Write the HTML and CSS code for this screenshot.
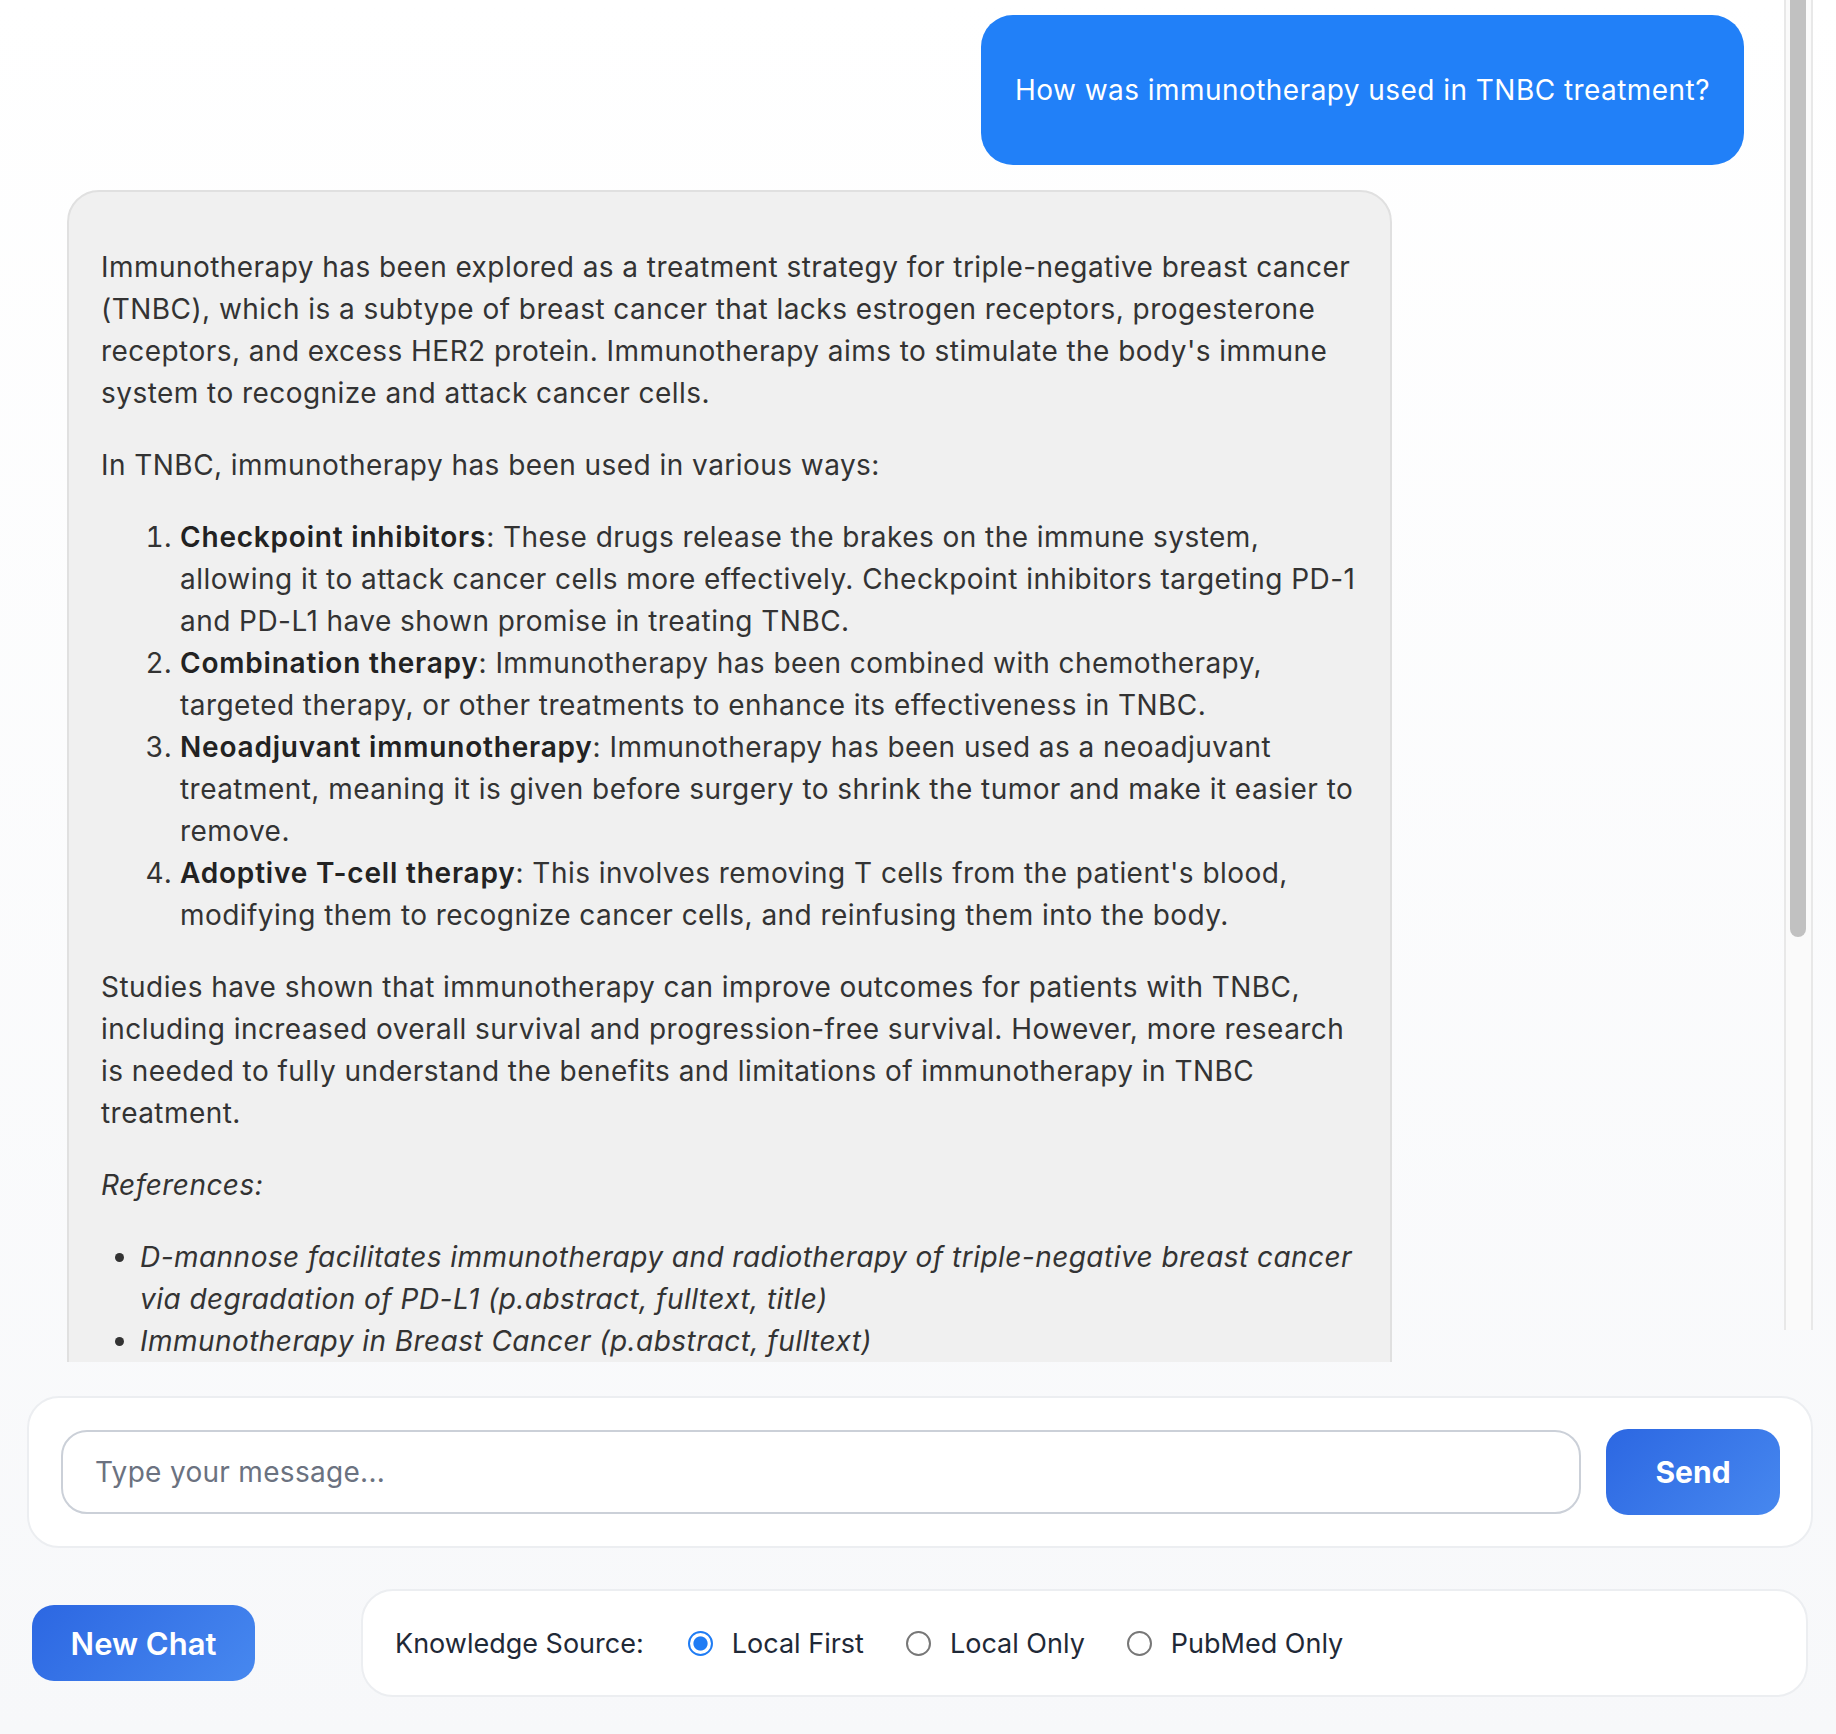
FILE: index.html
```html
<!DOCTYPE html>
<html lang="en">
<head>
<meta charset="utf-8">
<title>Chat</title>
<link rel="stylesheet" href="styles.css">
</head>
<body>
<div class="app">
  <div class="messages-area">
    <div class="messages">
      <div class="msg user">How was immunotherapy used in TNBC treatment?</div>
      <div class="msg assistant">
        <p>Immunotherapy has been explored as a treatment strategy for triple-negative breast cancer (TNBC), which is a subtype of breast cancer that lacks estrogen receptors, progesterone receptors, and excess HER2 protein. Immunotherapy aims to stimulate the body's immune system to recognize and attack cancer cells.</p>
        <p>In TNBC, immunotherapy has been used in various ways:</p>
        <ol>
          <li><strong>Checkpoint inhibitors</strong>: These drugs release the brakes on the immune system, allowing it to attack cancer cells more effectively. Checkpoint inhibitors targeting PD-1 and PD-L1 have shown promise in treating TNBC.</li>
          <li><strong>Combination therapy</strong>: Immunotherapy has been combined with chemotherapy, targeted therapy, or other treatments to enhance its effectiveness in TNBC.</li>
          <li><strong>Neoadjuvant immunotherapy</strong>: Immunotherapy has been used as a neoadjuvant treatment, meaning it is given before surgery to shrink the tumor and make it easier to remove.</li>
          <li><strong>Adoptive T-cell therapy</strong>: This involves removing T cells from the patient's blood, modifying them to recognize cancer cells, and reinfusing them into the body.</li>
        </ol>
        <p>Studies have shown that immunotherapy can improve outcomes for patients with TNBC, including increased overall survival and progression-free survival. However, more research is needed to fully understand the benefits and limitations of immunotherapy in TNBC treatment.</p>
        <p><em>References:</em></p>
        <ul class="refs">
          <li><em>D-mannose facilitates immunotherapy and radiotherapy of triple-negative breast cancer via degradation of PD-L1 (p.abstract, fulltext, title)</em></li>
          <li><em>Immunotherapy in Breast Cancer (p.abstract, fulltext)</em></li>
        </ul>
      </div>
    </div>
    <div class="scrollbar"><div class="thumb"></div></div>
  </div>
  <div class="composer">
    <input class="composer-input" type="text" placeholder="Type your message...">
    <button class="btn send-btn" type="button">Send</button>
  </div>
  <div class="bottom-row">
    <button class="btn new-chat" type="button">New Chat</button>
    <div class="source-card">
      <span class="source-label">Knowledge Source:</span>
      <label class="radio-item"><input type="radio" name="src" checked><span>Local First</span></label>
      <label class="radio-item"><input type="radio" name="src"><span>Local Only</span></label>
      <label class="radio-item"><input type="radio" name="src"><span>PubMed Only</span></label>
    </div>
  </div>
</div>
</body>
</html>
```

FILE: styles.css
```css
* { box-sizing: border-box; }
html, body { margin: 0; padding: 0; height: 100%; }
body {
  font-family: Inter, "Noto Sans", "Liberation Sans", sans-serif;
  background: linear-gradient(180deg, #ffffff 0%, #f7f8fa 100%);
  color: #333333;
  overflow: hidden;
}
.app {
  height: 1734px;
  display: flex;
  flex-direction: column;
}
.messages-area {
  flex: 1;
  min-height: 0;
  margin: 0 23px 0 27px;
  display: flex;
  align-items: flex-start;
}
.messages {
  flex: 1;
  min-width: 0;
  height: 100%;
  overflow: hidden;
  padding: 15px 40px 0 40px;
  display: flex;
  flex-direction: column;
  gap: 25px;
}
.scrollbar {
  width: 29px;
  height: 1330px;
  flex-shrink: 0;
  background: #fafafa;
  border-left: 2px solid #e8e8e8;
  border-right: 2px solid #e8e8e8;
}
.thumb {
  width: 16px;
  height: 937px;
  margin-left: 4px;
  background: #c1c1c1;
  border-radius: 0 0 8px 8px;
}
.msg {
  font-size: 28px;
  line-height: 42px;
  letter-spacing: 0.45px;
  flex-shrink: 0;
}
.user {
  align-self: flex-end;
  background: #2180f8;
  color: #ffffff;
  border-radius: 32px;
  padding: 54px 34px;
}
.assistant {
  align-self: flex-start;
  width: 79%;
  background: #f0f0f0;
  border: 2px solid #e0e0e0;
  border-radius: 32px;
  padding: 24px 32px;
  color: #333333;
}
.assistant p { margin: 30px 0; }
.assistant strong { font-weight: 600; color: #222222; letter-spacing: 0.8px; }
.assistant ol { margin: 30px 0; padding-left: 79px; }
.assistant ul.refs { margin: 30px 0; padding-left: 39px; }
.composer {
  margin: 34px 23px 0 27px;
  background: #ffffff;
  border: 2px solid #eceef1;
  border-radius: 32px;
  padding: 31px 31px 31px 32px;
  display: flex;
  align-items: center;
  gap: 25px;
}
.composer-input {
  flex: 1;
  height: 84px;
  border: 2px solid #cbd0d8;
  border-radius: 26px;
  padding: 0 32px;
  font-family: inherit;
  font-size: 28px;
  letter-spacing: 0.3px;
  color: #333333;
  background: #ffffff;
  outline: none;
}
.composer-input::placeholder { color: #6b7280; }
.btn {
  font-family: inherit;
  color: #ffffff;
  border: none;
  background: linear-gradient(135deg, #2c67e2 0%, #4788ef 100%);
  cursor: pointer;
}
.send-btn {
  width: 174px;
  height: 86px;
  border-radius: 22px;
  font-size: 30px;
  font-weight: 700;
}
.bottom-row {
  margin-top: 41px;
  padding: 0 0 37px 32px;
  display: flex;
  align-items: center;
  gap: 106px;
}
.new-chat {
  width: 223px;
  height: 76px;
  border-radius: 22px;
  font-size: 31px;
  font-weight: 600;
}
.source-card {
  width: 1447px;
  height: 108px;
  background: #ffffff;
  border: 2px solid #eceef1;
  border-radius: 32px;
  padding: 0 32px;
  display: flex;
  align-items: center;
  gap: 44px;
  color: #1f2937;
  font-size: 27px;
}
.radio-item {
  display: flex;
  align-items: center;
  gap: 19px;
  margin-right: -2px;
}
.radio-item input {
  appearance: none;
  -webkit-appearance: none;
  margin: 0;
  width: 25px;
  height: 25px;
  border: 2px solid #777777;
  border-radius: 50%;
  background: #ffffff;
}
.radio-item input:checked {
  border-color: #1f7cf4;
  background: radial-gradient(circle, #1f7cf4 0 6.6px, #ffffff 7.6px);
}
```
